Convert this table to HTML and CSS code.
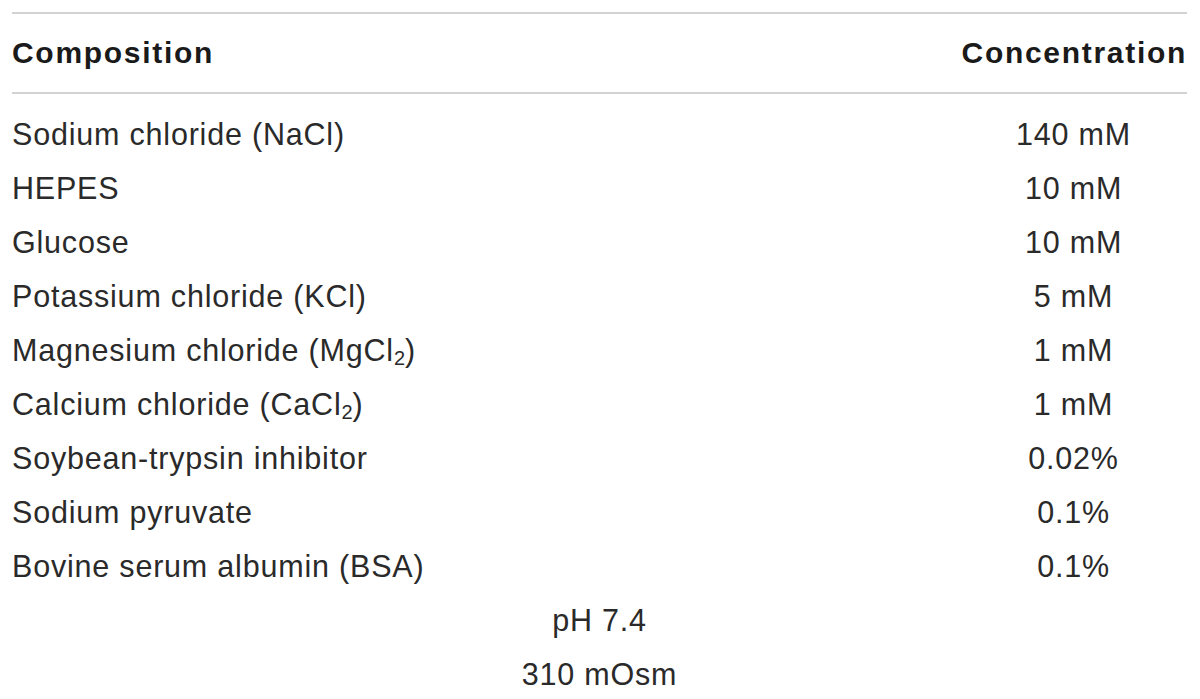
FILE: index.html
```html
<!DOCTYPE html>
<html>
<head>
<meta charset="utf-8">
<link rel="stylesheet" href="styles.css">
</head>
<body>
<div class="wrap">
<table class="tbl">
<thead>
<tr><th class="c1">Composition</th><th class="c2">Concentration</th></tr>
</thead>
<tbody>
<tr class="first"><td class="c1">Sodium chloride (NaCl)</td><td class="c2">140 mM</td></tr>
<tr><td class="c1">HEPES</td><td class="c2">10 mM</td></tr>
<tr><td class="c1">Glucose</td><td class="c2">10 mM</td></tr>
<tr><td class="c1">Potassium chloride (KCl)</td><td class="c2">5 mM</td></tr>
<tr><td class="c1">Magnesium chloride (MgCl<sub>2</sub>)</td><td class="c2">1 mM</td></tr>
<tr><td class="c1">Calcium chloride (CaCl<sub>2</sub>)</td><td class="c2">1 mM</td></tr>
<tr><td class="c1">Soybean-trypsin inhibitor</td><td class="c2">0.02%</td></tr>
<tr><td class="c1">Sodium pyruvate</td><td class="c2">0.1%</td></tr>
<tr><td class="c1">Bovine serum albumin (BSA)</td><td class="c2">0.1%</td></tr>
<tr><td class="mid" colspan="2">pH 7.4</td></tr>
<tr><td class="mid" colspan="2">310 mOsm</td></tr>
</tbody>
</table>
</div>
</body>
</html>
```
FILE: styles.css
```css
html, body {
  margin: 0;
  padding: 0;
  background: #ffffff;
}
.wrap {
  padding: 12px 0 0 12px;
}
.tbl {
  width: 1175px;
  border-collapse: collapse;
  font-family: "Liberation Sans", Arial, sans-serif;
  color: #2a2a2a;
}
.tbl thead tr {
  border-top: 2px solid #d2d2d2;
  border-bottom: 2px solid #d2d2d2;
}
.tbl th {
  font-size: 30px;
  font-weight: bold;
  letter-spacing: 1.7px;
  color: #1a1a1a;
  height: 78px;
  padding: 0;
  vertical-align: middle;
}
.tbl th.c1 {
  text-align: left;
}
.tbl th.c2 {
  text-align: right;
  width: 227px;
  padding-right: 0;
  margin-right: -2px;
}
.tbl td {
  font-size: 30.5px;
  letter-spacing: 0.8px;
  height: 54px;
  line-height: 54px;
  padding: 0;
  vertical-align: middle;
}
.tbl tr.first td {
  padding-top: 13px;
}
.tbl td.c1 {
  text-align: left;
}
.tbl td.c2 {
  text-align: center;
}
.tbl td.mid {
  text-align: center;
}
.tbl sub {
  font-size: 20px;
  letter-spacing: 0;
  line-height: 0;
  vertical-align: -4px;
}
```
